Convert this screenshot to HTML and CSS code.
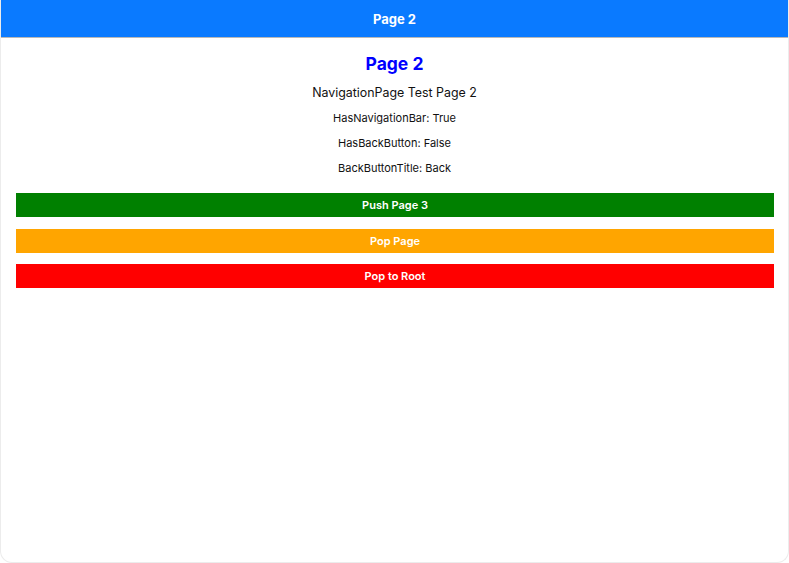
FILE: index.html
```html
<!DOCTYPE html>
<html>
<head>
<meta charset="utf-8">
<link rel="stylesheet" href="styles.css">
</head>
<body>
<div class="window">
  <header class="navbar"><span class="nav-title">Page 2</span></header>
  <main class="content">
    <h1 class="title">Page 2</h1>
    <p class="subtitle">NavigationPage Test Page 2</p>
    <p class="info">HasNavigationBar: True</p>
    <p class="info">HasBackButton: False</p>
    <p class="info">BackButtonTitle: Back</p>
    <div class="buttons">
      <button class="btn btn-green">Push Page 3</button>
      <button class="btn btn-orange">Pop Page</button>
      <button class="btn btn-red">Pop to Root</button>
    </div>
  </main>
</div>
</body>
</html>
```
FILE: styles.css
```css
html, body {
  margin: 0;
  padding: 0;
  background: #ffffff;
}
body {
  font-family: Inter, "Noto Sans", sans-serif;
  color: #000;
}
.window {
  width: 789px;
  height: 563px;
  box-sizing: border-box;
  border-radius: 0 0 12px 12px;
  border: 1px solid #ececec;
  border-top: none;
  overflow: hidden;
  background: #fff;
}
.navbar {
  height: 37px;
  background: #0a7aff;
  border-bottom: 1px solid #b8b8b8;
  display: flex;
  align-items: center;
  justify-content: center;
}
.nav-title {
  color: #fff;
  font-weight: 700;
  font-size: 13px;
}
.content {
  display: flex;
  flex-direction: column;
  align-items: center;
  padding-top: 14px;
}
.title {
  margin: 0;
  color: #0000ff;
  font-size: 17.5px;
  font-weight: 700;
  line-height: 24px;
}
.subtitle {
  margin: 9px 0 0;
  font-size: 12.4px;
  line-height: 16px;
  color: #111;
}
.info {
  margin: 9px 0 0;
  font-size: 11px;
  line-height: 16px;
  color: #111;
}
.info + .info {
  margin-top: 9px;
}
.buttons {
  align-self: stretch;
  display: flex;
  flex-direction: column;
  gap: 12px;
  padding: 0 14px 0 15px;
  margin-top: 17px;
}
.btn {
  height: 24px;
  border: none;
  padding: 0;
  margin: 0;
  color: #fff;
  font-family: Inter, "Noto Sans", sans-serif;
  font-weight: 600;
  font-size: 11px;
}
.btn-green { background: #008000; }
.btn-orange { background: #ffa500; margin-bottom: -1px; }
.btn-red { background: #ff0000; }
```
